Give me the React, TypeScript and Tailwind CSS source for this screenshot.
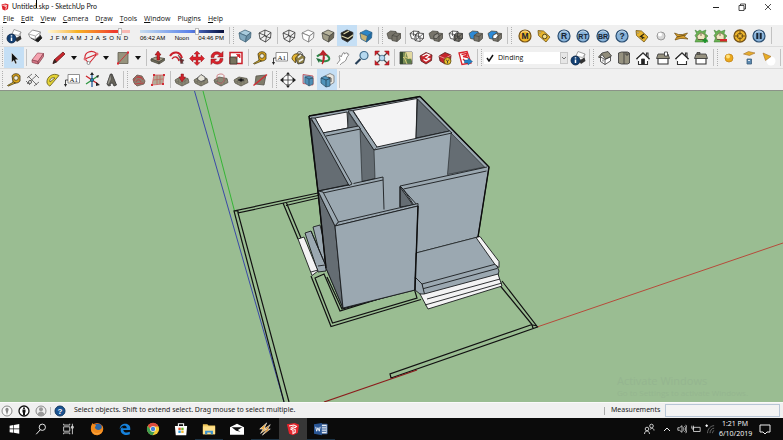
import { useState } from 'react';
import type { ReactNode } from 'react';

type Tool = [label: string, icon: ReactNode];

function Icon({ children }: { children: ReactNode }) {
  return (
    <svg viewBox="0 0 16 16" className="h-4 w-4 shrink-0" fill="none" stroke="#333" strokeWidth=".8" aria-hidden="true">
      {children}
    </svg>
  );
}

function Cube({ top, left, right, stroke }: { top: string; left: string; right: string; stroke?: string }) {
  return (
    <Icon>
      <g stroke={stroke ?? '#4a4a44'} strokeLinejoin="round">
        <path d="M2 5 8 2l6 2.500L9.500 8z" fill={top} />
        <path d="m2 5 7.500 3-1 6-5.500-3z" fill={left} />
        <path d="M9.500 8 14 4.500 13.500 10l-5 4z" fill={right} />
      </g>
    </Icon>
  );
}

function WireCube() {
  return (
    <Icon>
      <path d="M2 5 8 2l6 2.500-.5 5.500-5 4L3 11zM2 5l7.500 3L14 4.500M9.500 8l-1 6M8 2l-.5 6L3 11M7.500 8l6 2" strokeLinejoin="round" />
    </Icon>
  );
}

function StripedCube() {
  return (
    <Icon>
      <path d="M2 5 8 2l6 2.500-.5 5.500-5 4L3 11z" fill="#1f1f1c" />
      <path d="m4.500 6 5.500-3M2.500 8l6.500 2.500L14 7" stroke="#d8d2a8" strokeWidth="1.300" />
    </Icon>
  );
}

// Two overlapping solids, used by the solid tools
function Solids({ a, b, inner }: { a: string; b: string; inner?: string }) {
  return (
    <Icon>
      <path d="M1 5.500 4.500 3 10 3.500l1 4-3.500 4-5-1z" fill={a} stroke="#4c4b45" />
      <path d="m6 7.500 3.500-2.500 5 .5v5L11 13.500l-5-1z" fill={b} stroke="#4c4b45" />
      <path d="m6 7.500 5 1 3.500-3M11 8.500v5" stroke="#3c3b36" strokeWidth=".6" />
      {inner && <path d="m6 7.500 3.500-2 1.500 2-2 3H6z" fill={inner} stroke="#333" strokeWidth=".6" />}
    </Icon>
  );
}

function WireSolids({ fill }: { fill?: string }) {
  return (
    <Icon>
      <path d="M1 5.500 4.500 3 10 3.500l1 5-3.500 3-5-1z" fill="#fafafa" stroke="#333" />
      <path d="m6 7.500 3.500-2.500 5 .5v5L11 13.500l-5-1z" fill={fill ?? '#fafafa'} stroke="#333" />
      <path d="m6 7.500 5 1 3.500-3M11 8.500v5M1 5.500l5.500 1L10 3.500M6.500 6.500l1 5M9.500 5v5l5 .5M9.500 10 6 12.500M4.500 3v5" stroke="#333" strokeWidth=".7" />
    </Icon>
  );
}

function ShadowInfo() {
  return (
    <Icon>
      <path d="M6 6 8 1.500l7 2.500-1.500 5-6 1z" fill="#fff" stroke="#888" />
      <path d="m6 6 6.500 1.500L15 4" stroke="#999" />
      <path d="m9 11 5.500-3.500L15.500 11 11 14z" fill="#333" stroke="none" />
      <circle cx="5.500" cy="10.500" r="4.500" fill="#123f73" stroke="#0b2444" />
      <path d="M5.500 9.500V13M5.500 7.300v1.200" stroke="#fff" strokeWidth="1.500" />
    </Icon>
  );
}

function ShadowToggle() {
  return (
    <Icon>
      <path d="m4 10 7 4 4-4-2-3z" fill="#1c1c1c" stroke="#222" />
      <path d="M1.500 6 5.500 2l8 2-1 4-4.500 3.500-5-2z" fill="#fff" stroke="#777" />
      <path d="m1.500 6 7 2 5-4M8.500 8 8 11.500" stroke="#999" />
    </Icon>
  );
}

function Cursor() {
  return <Icon><path d="M5.500 2.500v10l2.300-2 1.500 3.500 1.700-.8-1.500-3.400h3z" fill="#111" stroke="#fff" strokeWidth=".5" /></Icon>;
}

function Eraser() {
  return (
    <Icon>
      <path d="m2 10 5.500-7 6 .5-5.500 8z" fill="#f5a3b0" stroke="#a45563" />
      <path d="m2 10 6 1.500.2 2.500-6-1.500zM8 11.500l5.500-8v3L8.200 14z" fill="#d77687" stroke="#8d4652" />
    </Icon>
  );
}

function Pencil() {
  return (
    <Icon>
      <path d="m2 13.500 1.500-4L12 2l2 2-8.500 8z" fill="#c9262d" stroke="#6d1b1b" />
      <path d="m2 13.500 1.500-4 2 2.500z" fill="#3a2a20" stroke="#222" strokeWidth=".6" />
    </Icon>
  );
}

function Arc() {
  return (
    <Icon>
      <path d="M2 9C1 2 9-1 14 4M2 9l4 4.500M14 4l-8 9.500M2 9l12-5" stroke="#d32530" strokeWidth="1.100" />
      <circle cx="2" cy="9" r="1" fill="#fff" stroke="#d32530" /><circle cx="14" cy="4" r="1" fill="#fff" stroke="#d32530" /><circle cx="5.500" cy="13" r="1.500" fill="#fff" stroke="#777" />
    </Icon>
  );
}

function Rect() {
  return (
    <Icon>
      <path d="M3 2.500h10v11H3z" fill="#96937d" stroke="#5f5d50" />
      <path d="m3 13.500 10-11" stroke="#d32530" />
      <path d="M2 12.500h2v2H2zM12 1.500h2v2h-2z" fill="#e02530" stroke="none" />
    </Icon>
  );
}

function PushPull() {
  return (
    <Icon>
      <path d="m1 9 5-2 8.500 1.500L9 12z" fill="#a5a189" stroke="#4c4a40" />
      <path d="m1 9 8 3v2L1 11zM9 12l5.500-3.500v2L9 14z" fill="#706d5a" stroke="#4c4a40" />
      <path d="M7 10V5H5l3-4 3 4H9.500v5z" fill="#d21f26" stroke="#7b1115" strokeWidth=".6" />
    </Icon>
  );
}

function Offset() {
  return (
    <Icon>
      <path d="M1 6c3-5 10-5 12 2" stroke="#c9202a" strokeWidth="2" />
      <path d="M3 9c2-3 6-3 7 2" stroke="#c9202a" strokeWidth="1.300" />
      <path d="m9 5 5 9-1-5zM10.500 9l1.500 5 3-4z" fill="#8d1a1f" stroke="#444" strokeWidth=".5" />
    </Icon>
  );
}

function Move() {
  return (
    <Icon>
      <path
        d="m8 1 3 3H9v3h3V5l3.500 3.500L12 12v-2H9v2.500h2L8 15.500 5 12.500h2V10H4v2L.500 8.500 4 5v2h3V4H5z"
        fill="#d9222b" stroke="#8d1519" strokeWidth=".4"
      />
    </Icon>
  );
}

function Rotate() {
  return (
    <Icon>
      <path d="M2 7.500C2 1.500 9 .500 12 3.500l2-2v5.500H8.500l2-2C8.500 3.500 5 4 5 7.500zM14 8.500c0 6-7 7-10 4l-2 2V9h5.500l-2 2c2 1.500 5.500 1 5.500-2.500z" fill="#dc222b" stroke="#7c1418" strokeWidth=".5" />
    </Icon>
  );
}

function Scale() {
  return (
    <Icon>
      <path d="M2 2.500h12v11H2z" fill="#fff" stroke="#c9202a" strokeWidth="1.500" />
      <path d="M2 7h7v7H2z" fill="#78745f" stroke="#3a382f" />
      <path d="m7 9 4-4M8.500 4.500H12V8z" fill="#d9222b" stroke="#d9222b" />
    </Icon>
  );
}

function Tape() {
  return (
    <Icon>
      <path d="M6 4c1-3 7-3 8 0v5c-1 2-6 3-7 1z" fill="#dca419" stroke="#3f3413" />
      <circle cx="10" cy="6" r="2.300" fill="#f4f0df" stroke="#4c421e" />
      <path d="m1.500 13.500 6-3.500 2 1-7 3z" fill="#e6bd32" stroke="#493c12" />
    </Icon>
  );
}

function TextLabel() {
  return (
    <Icon>
      <path d="M4 2.500h11.500v8.500H4z" fill="#fff" stroke="#777" />
      <path d="M4 8H1.500v6" stroke="#222" /><path d="m0 12 1.500 3L3 12z" fill="#222" stroke="none" />
      <text x="5.500" y="9.500" fontSize="7" fontFamily="Liberation Serif, serif" fill="#111" stroke="none">A1</text>
    </Icon>
  );
}

function Paint() {
  return (
    <Icon>
      <path d="m4 8 5-4.500 5 3.500-1.500 6-5.500 1z" fill="#8e8044" stroke="#333" />
      <path d="M1 9c0-4 3-6 7-5L4.500 8v5z" fill="#e3b432" stroke="#554417" />
      <path d="m7 7.500 3-2.500M8 11.500l4-2.500" stroke="#eee" strokeWidth="1.600" />
      <path d="M6 4.500c0-4 5-4 6 1" />
    </Icon>
  );
}

function Orbit() {
  return (
    <Icon>
      <path d="M2 6.500c3-3 10-3 12 1s-6 4.500-10 2.500" stroke="#2b8a4a" strokeWidth="2" />
      <path d="M8 4c2 2 1 8-1 10M5.500 4.500 8 1l3 3.500z" fill="#cc2930" stroke="#b7242a" strokeWidth="1.500" />
      <path d="m1 8 4 1-1 4z" fill="#236f3c" stroke="none" />
    </Icon>
  );
}

function Hand() {
  return (
    <Icon>
      <path
        d="m2 14 3-4-1-4c1-1 2 0 2 1l2-4c1-1 2 0 1 1l2-1c1-.5 2 0 1 1l1 0c2 0 0 2-1 3l-1 3c-2 3-4 2-6 5"
        fill="#fff" stroke="#777"
      />
    </Icon>
  );
}

function Zoom() {
  return (
    <Icon>
      <path d="m1.500 14 5-5" stroke="#263f57" strokeWidth="2.200" />
      <circle cx="10" cy="5.500" r="4" fill="#b6d9ef" stroke="#426c89" strokeWidth="1.200" />
    </Icon>
  );
}

function ZoomExtents() {
  return (
    <Icon>
      <path d="m2 2 12 12M14 2 2 14" stroke="#444" strokeWidth="1.200" />
      <path d="M1 1h4.500L1 5.500zM15 1v4.500L10.500 1zM1 15v-4.500L5.500 15zM15 15h-4.500L15 10.500z" fill="#ce2029" stroke="#8e151b" strokeWidth=".5" />
      <circle cx="8" cy="8" r="2.800" fill="#b6d9ef" stroke="#436782" />
    </Icon>
  );
}

function MapTool() {
  return (
    <Icon>
      <path d="M2 2h12v12H2z" fill="#7b8f58" stroke="#444" />
      <path d="M8 2h6v7l-4-1z" fill="#e3d9a0" stroke="none" />
      <path d="m2 11 4-4 3 7M8 2 7 7l7 3" stroke="#ead983" />
      <path d="M2 2h3v12H2z" fill="#34492f" stroke="none" />
      <path d="M9 9h4v4H9z" fill="#5a7c4c" stroke="none" />
    </Icon>
  );
}

function Warehouse({ badge }: { badge?: boolean }) {
  return (
    <Icon>
      <path d="m2 6 6-3.500 6 2.500-.5 5.500L8 14l-5-3z" fill="#c5252b" stroke="#57201f" />
      {!badge && <path d="m4.500 6 4-2 3 1.200L8 7.500l3.500 1.300L8 11 5.500 9.500" stroke="#fff" strokeWidth="1.200" />}
      {badge && <path d="m2 6 6 2.500L14 5" stroke="#f2a4a4" />}
      {badge && <circle cx="10.500" cy="11" r="3.500" fill="#e8bd2b" stroke="#5c4b12" />}
      {badge && <path d="m9 9.500 1.500 2 1.500-2M10.500 11v2.500" stroke="#333" />}
    </Icon>
  );
}

function LayOut() {
  return (
    <Icon>
      <path d="m2 3 8-1.500L14 13l-9 1.500z" fill="#fff" stroke="#d9222b" strokeWidth="1.300" />
      <path d="m4.500 4.500 5-1 .5 2-4 1 5 1M6 9l2 2" stroke="#d9222b" strokeWidth="1.300" />
      <path d="M7.500 10H11V8l4.500 3.500L11 15v-2H7.500z" fill="#2383c7" stroke="#164f79" strokeWidth=".4" />
    </Icon>
  );
}

function Dimension() {
  return (
    <Icon>
      <path d="m2 6 5-4M9 14l5-4M3 4l9 9M2 12l10-9M1 9l4 4M10 2l4 4" stroke="#555" />
      <circle cx="5" cy="10" r="1.500" fill="#fff" />
    </Icon>
  );
}

function Protractor() {
  return (
    <Icon>
      <path d="M2 11C1 5 8 0 14 3.500L5 14c-1 0-2-1-3-3z" fill="#e5d336" stroke="#605818" />
      <path d="M5 10c-1-3 2-5 5-4z" fill="#f0f0f0" stroke="#605818" />
    </Icon>
  );
}

function Axes() {
  return (
    <Icon>
      <path d="m8 8-6-4M8 8l6 4" stroke="#cf242b" strokeWidth="1.300" />
      <path d="m8 8 6-4M8 8l-6 4" stroke="#2f9641" strokeWidth="1.300" />
      <path d="M8 1v14" stroke="#265f9d" strokeWidth="1.300" />
      <path d="m6 3 2-3 2 3zM12 10l4 3-4 1zM12 4l3-1-1 3z" fill="#222" stroke="none" />
      <circle cx="8" cy="8" r="1.600" fill="#2a83ac" stroke="#174c67" />
    </Icon>
  );
}

function Text3D() {
  return (
    <Icon>
      <path d="m4 12 3.500-10H9l4.500 11-2.500 1-1.500-3-2.500.5.5 2-2 .5z" fill="#66645a" stroke="#333" />
      <path d="M4 12 7.500 2l1 5L6 12.500z" fill="#99978c" stroke="#444" strokeWidth=".6" />
    </Icon>
  );
}

function Terrain({ kind }: { kind: 'contour' | 'grid' | 'smoove' | 'stamp' | 'drape' | 'detail' | 'flip' }) {
  if (kind === 'contour') {
    return (
      <Icon>
        <path d="m2 7 4-4 5 1 3 5-1 3-7 2-3-3z" fill="#8d7f70" stroke="#6d5349" />
        <path d="M3 9c1-5 7-6 9-1M5 10c1-3 4-3 5 0M3.500 12l9-1M6 5l5 1" stroke="#ce343b" />
      </Icon>
    );
  }
  if (kind === 'grid') {
    return (
      <Icon>
        <path d="m4 3 10 0-1 9-11 1z" fill="#b3ac98" stroke="#d9646a" />
        <path d="m3 8 10-1M7 3v10M10 3v9" stroke="#bd6b60" />
        <path d="M3 2h2v2H3zM13 2h2v2h-2zM1 12h2v2H1zM12 11h2v2h-2z" fill="#d12c34" stroke="none" />
      </Icon>
    );
  }
  if (kind === 'flip') {
    return <Icon><path d="m4 4 10-1-2 10-9-1z" fill="#7f7c6a" stroke="#55534a" /><path d="M1.500 13.500 15 2.500" stroke="#d12c34" strokeWidth="1.300" /></Icon>;
  }
  return (
    <Icon>
      <path d="m1 8 5-3 8 1.500 1 4L8 14l-6-3z" fill="#8c8975" stroke="#5a584d" />
      <path d="m2 9 6 2 6-4M8 11v3M5 6l-1 6M11 6v6" stroke="#6a685c" strokeWidth=".6" />
      {kind === 'smoove' && <path d="M7 5V2h2.500v3h2L8 10 5 5z" fill="#cf222a" stroke="#801519" strokeWidth=".5" />}
      {kind === 'stamp' && <path d="m4.500 6 3.500-3.500 4 2.500v3L8 9.500 5 8z" fill="#e5e3d8" stroke="#444" />}
      {kind === 'drape' && <path d="M4 8V3.500c2-2 6-2 7 0V9M4 10c2 2 5 2 7-1" stroke="#c7646a" />}
      {kind === 'detail' && <path d="m5 8 3-1.500 3 1.500-3 1.500z" fill="#111" />}
    </Icon>
  );
}

function SectionPlane() {
  return (
    <Icon>
      <circle cx="8" cy="8" r="5" fill="#fff" stroke="#333" />
      <path d="M3 8h10M8 1v14" stroke="#333" />
      <path d="m6 2.500 2-2.500 2 2.500zM6 13.500 8 16l2-2.500zM0 8l3-2.500v5zM16 8l-3-2.500v5z" fill="#222" stroke="none" />
    </Icon>
  );
}

function SectionCube({ red }: { red?: boolean }) {
  if (red) {
    return (
      <Icon>
        <path d="M3 2.500 13 4v9L3 11.500z" fill="#8dbfdc" stroke="#c74149" />
        <path d="m5 5 4-1 4 2v6l-4 2-4-3z" fill="#4f8fb8" stroke="#47677c" />
        <path d="m9 7 4-1M9 7v7M5 5l4 2" stroke="#2c4f66" />
      </Icon>
    );
  }
  return (
    <Icon>
      <path d="m6 4 5-2.500 4 2v7L11 13z" fill="#e8e6df" stroke="#777" />
      <path d="m2 6 4-2 5 2.500V14l-4 1-5-4z" fill="#4f93bb" stroke="#34566c" />
      <path d="m7 8 4-1.500M7 8v7M2 6l5 2" stroke="#234355" />
      <path d="m9 5 3 1v4" stroke="#333" />
    </Icon>
  );
}

function Badge({ text, gold }: { text: string; gold?: boolean }) {
  return (
    <Icon>
      <circle cx="8" cy="8" r="6" fill={gold ? '#eeb52a' : '#86b1d8'} stroke={gold ? '#765316' : '#2b4e71'} strokeWidth="1.200" />
      <path d="M4 5.500c1-3 6-3.500 8-.5" stroke="#fff" opacity=".7" />
      <text x="8" y={text.length > 1 ? 10.5 : 11} textAnchor="middle" fontSize={text.length > 1 ? 7 : 8.5} fontWeight="700" fontFamily="Liberation Sans, sans-serif" fill="#182432" stroke="none">{text}</text>
    </Icon>
  );
}

function Pause() {
  return (
    <Icon>
      <circle cx="8" cy="8" r="6" fill="#86b1d8" stroke="#2b4e71" strokeWidth="1.200" />
      <path d="M4 5.500c1-3 6-3.500 8-.5" stroke="#fff" opacity=".7" />
      <path d="M6.300 5v6M9.700 5v6" stroke="#182432" strokeWidth="2" />
    </Icon>
  );
}

function Tag({ round }: { round?: boolean }) {
  return (
    <Icon>
      <path d="m2 2.500 5.500.5 6.500 6-4 5L2.500 7.500z" fill="#e7b42d" stroke="#705619" />
      {round ? <circle cx="8.700" cy="8.500" r="2.300" fill="#f4df8e" stroke="#33290d" /> : <path d="M10 6 6.500 8.500l4 1.500M7.500 7l1 4" stroke="#33290d" strokeWidth="1.200" />}
      <circle cx="4" cy="4.500" r=".8" fill="#fff" stroke="#705619" strokeWidth=".5" />
    </Icon>
  );
}

function Sphere({ gold }: { gold?: boolean }) {
  return (
    <Icon>
      <circle cx="8" cy="8" r="4" fill={gold ? '#eba91d' : '#d8d8d8'} stroke={gold ? '#c38419' : '#888'} />
      <circle cx="7" cy="6.500" r="2" fill={gold ? '#ffe17d' : '#fff'} stroke="none" />
    </Icon>
  );
}

function Plane() {
  return <Icon><path d="m1.500 5 4 1.500h4l5-1.500-3 3.500 3.500 2.500-5-.5-3 0-5 1.500 2-3.500z" fill="#d69d29" stroke="#6b4d16" strokeWidth=".7" /><path d="m4 9 8-2" stroke="#5b4112" /></Icon>;
}

function Proxy({ minus }: { minus?: boolean }) {
  return (
    <Icon>
      <path d="m2 2 2.500 1.500L7 2l2 1.500L13 2l-1 3.500L15 8l-2 2 2 4H2l1.500-4L2 7.500l1.500-2z" fill="#69b052" stroke="#3d7c32" strokeWidth=".5" />
      <path d="m4 8 4-3.500L12 7v4.500H5z" fill="#f0e6c2" stroke="#6e6142" strokeWidth=".6" />
      <path d="M5 11.500h6M8 5v3" stroke="#5b4f35" strokeWidth=".8" />
      {minus ? <path d="M8 11h7v2.500H8z" fill="#d6262b" stroke="none" /> : <path d="M12 10v5M9.500 12.500h5" stroke="#19912b" strokeWidth="1.600" />}
    </Icon>
  );
}

function Target() {
  return (
    <Icon>
      <circle cx="8" cy="8" r="6" fill="#efb72d" stroke="#765316" strokeWidth="1.300" />
      <circle cx="8" cy="8" r="2.800" stroke="#5d4313" /><path d="M8 3v4M8 9v4M3 8h4M9 8h4" stroke="#5d4313" />
    </Icon>
  );
}

function House({ kind }: { kind: 'iso' | 'top' | 'front' | 'right' | 'back' | 'left' }) {
  if (kind === 'iso') {
    return (
      <Icon>
        <path d="M3.500 7 8 9.500 13.500 7v4L8 14.500l-4.500-3z" fill="#fff" />
        <path d="m1.500 7 3.500-4L11 1.500 14.500 6 8.500 9 5 4.500 2.500 8z" fill="#918d7b" />
        <path d="M6 9.500v2M8 9.500v5" />
      </Icon>
    );
  }
  if (kind === 'top') {
    return <Icon><path d="m2.500 3 3-1h6l2 1v10l-2 1h-6l-3-1z" fill="#969280" /><path d="M8 2v12M10 2v3h2V2.500" /></Icon>;
  }
  if (kind === 'front' || kind === 'back') {
    return (
      <Icon>
        <path d="M3.500 8v6.500h9V8" fill="#fff" strokeWidth="1.100" />
        <path d="M1.500 9 8 3l6.500 6M11.500 5.500V3H13v4" strokeWidth="1.100" />
        <path d="m8 3 5 5v3H3V8z" fill="#fff" stroke="none" />
        <path d="M1.500 9 8 3l6.500 6" strokeWidth="1.100" />
        {kind === 'front' && <path d="M6.500 9h3v5.500h-3z" fill="#222" />}
      </Icon>
    );
  }
  return (
    <Icon>
      <path d="M3 8h10v6H3z" fill="#fff" strokeWidth="1.100" />
      <path d="M3 4h10l1.500 4.500h-13z" fill="#969280" />
      {kind === 'right' && <path d="M9.500 2h3v4h-3z" fill="#fff" />}
      {kind === 'left' && <path d="M4 2.500h3V4H4z" fill="#969280" />}
    </Icon>
  );
}

function AreaLight() {
  return (
    <Icon>
      <path d="m2.500 4 5-2.500L14 3 8.500 5.500z" fill="#e6ad2c" stroke="#a36f2c" strokeWidth=".6" />
      <path d="M6 9h4.500v5H6z" fill="#5c89af" stroke="#3b5d7b" /><path d="M7 10.500h2" stroke="#fff" />
    </Icon>
  );
}

function SpotLight() {
  return <Icon><circle cx="11" cy="11" r="4.500" fill="#fff" stroke="none" /><path d="m3 3 8 3.500-5.500 4z" fill="#e8ad25" stroke="#a36f2c" strokeWidth=".6" /></Icon>;
}

const SHADOW: Tool[] = [['Shadow settings', <ShadowInfo />], ['Show shadows', <ShadowToggle />]];
const EDGE_STYLE: Tool[] = [['X-ray', <Cube top="#a9cbdd" left="#82a9bf" right="#688da3" stroke="#44677c" />], ['Back edges', <WireCube />]];
const FACE_STYLE: Tool[] = [
  ['Wireframe', <WireCube />],
  ['Hidden line', <Cube top="#fff" left="#fff" right="#f4f4f4" stroke="#777" />],
  ['Shaded', <Cube top="#b6b39c" left="#a19e88" right="#6d6957" />],
  ['Shaded with textures', <StripedCube />],
  ['Monochrome', <Cube top="#2a86c8" left="#c8b273" right="#1f6ca6" stroke="#2f6288" />],
];
const SHELL: Tool[] = [['Outer shell', <Solids a="#77746a" b="#77746a" />]];
const SOLID: Tool[] = [
  ['Intersect', <WireSolids />],
  ['Union', <Solids a="#77746a" b="#77746a" inner="#96938a" />],
  ['Subtract', <WireSolids fill="#77746a" />],
  ['Trim', <Solids a="#2d8ad6" b="#77746a" />],
  ['Split', <Solids a="#2d8ad6" b="#77746a" inner="#fff" />],
];
const VRAY: Tool[] = [
  ['Material editor', <Badge text="M" gold />], ['Options', <Tag round />], ['Render', <Badge text="R" />],
  ['Real-time render', <Badge text="RT" />], ['Batch render', <Badge text="BR" />], ['Help', <Badge text="?" />],
  ['Frame buffer', <Tag />], ['Sphere', <Sphere />], ['Infinite plane', <Plane />], ['Export proxy', <Proxy />],
  ['Import proxy', <Proxy minus />], ['Camera focus', <Target />], ['Freeze render', <Pause />],
];
const EDIT: Tool[] = [['Push/Pull', <PushPull />], ['Offset', <Offset />], ['Move', <Move />], ['Rotate', <Rotate />], ['Scale', <Scale />]];
const MEASURE: Tool[] = [['Tape measure', <Tape />], ['Text', <TextLabel />], ['Paint bucket', <Paint />]];
const VIEW: Tool[] = [['Orbit', <Orbit />], ['Pan', <Hand />], ['Zoom', <Zoom />], ['Zoom extents', <ZoomExtents />]];
const SHARE: Tool[] = [
  ['Add location', <MapTool />], ['3D Warehouse', <Warehouse />],
  ['Extension Warehouse', <Warehouse badge />], ['Send to LayOut', <LayOut />],
];
const VIEWS: Tool[] = [
  ['Iso', <House kind="iso" />], ['Top', <House kind="top" />], ['Front', <House kind="front" />],
  ['Right', <House kind="right" />], ['Back', <House kind="back" />], ['Left', <House kind="left" />],
];
const LIGHTS: Tool[] = [['Omni light', <Sphere gold />], ['Rectangle light', <AreaLight />], ['Spot light', <SpotLight />]];
const CONSTRUCTION: Tool[] = [
  ['Tape', <Tape />], ['Dimension', <Dimension />], ['Protractor', <Protractor />],
  ['Label', <TextLabel />], ['Axes', <Axes />], ['3D text', <Text3D />],
];
const SANDBOX: Tool[] = [['From contours', <Terrain kind="contour" />], ['From scratch', <Terrain kind="grid" />]];
const TERRAIN: Tool[] = [
  ['Smoove', <Terrain kind="smoove" />], ['Stamp', <Terrain kind="stamp" />], ['Drape', <Terrain kind="drape" />],
  ['Add detail', <Terrain kind="detail" />], ['Flip edge', <Terrain kind="flip" />],
];
const SECTION: Tool[] = [['Section plane', <SectionPlane />], ['Display section planes', <SectionCube red />], ['Display section cuts', <SectionCube />]];

function Strip({ tools, className, active }: { tools: Tool[]; className: string; active?: number }) {
  return (
    <div className={`flex h-full shrink-0 ${className}`}>
      {tools.map(([label, icon], i) => (
        <button
          key={label}
          aria-label={label}
          className={`flex min-w-0 flex-1 items-center justify-center hover:bg-[#dcebf8] ${i === active ? 'bg-[#c5dff5]' : ''}`}
        >
          {icon}
        </button>
      ))}
    </div>
  );
}

function Sep() {
  return <div className="flex h-full w-1 shrink-0 justify-center py-0.5"><span className="w-px bg-[#c2c2c2]" /></div>;
}

function Grip() {
  return <div className="flex h-full w-1 shrink-0 justify-center py-0.5"><span className="border-l border-dotted border-[#b0b0b0]" /></div>;
}

function DrawTool({ label, icon }: { label: string; icon: ReactNode }) {
  return (
    <div className="mr-0.5 flex h-full shrink-0 items-center">
      <button aria-label={label} className="flex h-full w-[22px] items-center justify-center">{icon}</button>
      <button aria-label={`${label} options`} className="flex h-full w-2 items-center justify-center">
        <svg viewBox="0 0 6 4" className="h-1 w-1.5 shrink-0"><path d="M0 0h6L3 4z" fill="#111" /></svg>
      </button>
    </div>
  );
}

function ShadowSliders() {
  const [month, setMonth] = useState(11);
  const [hour, setHour] = useState(68);
  return (
    <>
      <div className="relative ml-[3px] w-[82px] shrink-0">
        <div className="h-[3px] bg-linear-to-r from-[#fff6cf] via-[#f6b322] via-35% to-[#ef3a2c] to-80%" />
        <input
          type="range" min="0" max="15" value={month} aria-label="Date"
          onChange={(e) => setMonth(Number(e.target.value))}
          className="absolute inset-x-0 top-0 h-1 w-full opacity-0"
        />
        <span className="absolute top-0 right-0 h-[3px] w-2 bg-[#f8b9b4]" />
        <span className="absolute -top-0.5 left-[70px] h-[7px] w-1 border border-[#bbb] bg-white" />
        <div className="mt-0.5 flex justify-between px-0.5 text-[6px] leading-[7px]">
          {'JFMAMJJASOND'.split('').map((m, i) => <span key={i}>{m}</span>)}
        </div>
      </div>
      <div className="relative ml-2.5 mr-[3px] w-[84px] shrink-0">
        <div className="h-[3px] bg-linear-to-r from-[#c8dced] via-[#5b80e8] via-60% to-[#08103a]" />
        <input
          type="range" min="0" max="100" value={hour} aria-label="Time"
          onChange={(e) => setHour(Number(e.target.value))}
          className="absolute inset-x-0 top-0 h-1 w-full opacity-0"
        />
        <span className="absolute -top-0.5 left-[55px] h-[7px] w-1 border border-[#bbb] bg-white" />
        <div className="mt-0.5 flex justify-between text-[6px] leading-[7px]">
          <span>06:42 AM</span><span>Noon</span><span>04:46 PM</span>
        </div>
      </div>
    </>
  );
}

function Toolbars() {
  return (
    <div className="overflow-hidden border-b border-[#8b9388] bg-[#f0f0f0]">
      <div className="flex h-[22px] items-center border-b border-[#dcdcdc] font-['Liberation_Sans',sans-serif] text-black">
        <Grip />
        <Strip tools={SHADOW} className="w-[41px]" />
        <ShadowSliders />
        <Sep /><Grip />
        <Strip tools={EDGE_STYLE} className="w-10" />
        <Sep />
        <Strip tools={FACE_STYLE} className="w-[97px]" active={3} />
        <Sep /><Grip />
        <Strip tools={SHELL} className="w-[19px]" />
        <Sep />
        <Strip tools={SOLID} className="w-[98px]" />
        <Sep /><Grip />
        <Strip tools={VRAY} className="ml-0.5 w-[254px]" />
        <Sep />
      </div>
      <div className="flex h-[22px] items-center border-b border-[#dcdcdc]">
        <Grip />
        <Strip tools={[['Select', <Cursor />]]} className="w-5" active={0} />
        <Sep />
        <Strip tools={[['Eraser', <Eraser />]]} className="w-5" />
        <DrawTool label="Line" icon={<Pencil />} />
        <DrawTool label="Arc" icon={<Arc />} />
        <DrawTool label="Rectangle" icon={<Rect />} />
        <Sep />
        <Strip tools={EDIT} className="w-[98px]" />
        <Sep />
        <Strip tools={MEASURE} className="w-[59px]" />
        <Sep />
        <Strip tools={VIEW} className="w-[79px]" />
        <Sep />
        <Strip tools={SHARE} className="w-[79px]" />
        <Sep /><Grip />
        <div className="relative ml-px flex h-3 w-[84px] shrink-0 items-center bg-white">
          <svg viewBox="0 0 8 8" className="ml-0.5 h-2 w-2 shrink-0"><path d="m1 4 2 3 4-6" stroke="#111" strokeWidth="1.500" fill="none" /></svg>
          <select aria-label="Layer" className="h-full min-w-0 flex-1 appearance-none pl-1 text-[7px] leading-3">
            <option>Dinding</option>
          </select>
          <span className="pointer-events-none flex h-full w-2 items-center justify-center border border-[#c8c8c8] bg-[#e6e6e6]">
            <svg viewBox="0 0 6 4" className="h-1 w-1.5 shrink-0"><path d="m1 1 2 2 2-2" stroke="#555" fill="none" strokeWidth=".8" /></svg>
          </span>
        </div>
        <Strip tools={[['Layer manager', <ShadowInfo />]]} className="w-[19px]" />
        <Sep /><Grip />
        <Strip tools={VIEWS} className="w-[116px]" />
        <Sep /><Grip />
        <Strip tools={LIGHTS} className="w-[59px]" />
        <Sep />
      </div>
      <div className="flex h-[21px] items-center">
        <Grip />
        <Strip tools={CONSTRUCTION} className="w-[117px]" />
        <Sep /><Grip />
        <Strip tools={SANDBOX} className="w-[39px]" />
        <Sep />
        <Strip tools={TERRAIN} className="w-[98px]" />
        <Sep /><Grip />
        <Strip tools={SECTION} className="w-[59px]" active={2} />
        <Sep />
      </div>
    </div>
  );
}

const LIGHT = '#9ba8b1';
const DARK = '#656d73';
const WHITE = '#f3f3f4';

function Model() {
  return (
    <svg viewBox="0 91 783 311" preserveAspectRatio="xMidYMid slice" className="block h-full w-full" aria-label="House model">
      {/* axes */}
      <g fill="none" strokeWidth="1">
        <path d="M194.500 91 284 402" stroke="#3a49a8" />
        <path d="M203 91 234.500 211" stroke="#35b535" />
        <path d="M537 327 783 243" stroke="#b64a3a" />
      </g>
      {/* fence and path outlines on the ground */}
      <g fill="none" stroke="#111" strokeWidth="1.200">
        <path d="M318 193 234 211 284 402M318 195.500 238 213 289 402M234 211h4v2" />
        <path d="m283 203 15 36M286.500 203l14.500 35M286 205.500 318 198" />
        <path d="m311 276 20 50.500 90-27M315 278l17.500 45 84.500-25-3-10-74 23-16-37z" />
        <path d="m327 277 15 32 73-20" />
        <path d="m502 281 35.500 46L391 378l-1-4 142-49.500-32-39M532 324.500l1 4M533 325l4 1" />
      </g>
      <path d="m324 402 93-32" stroke="#8c1c1c" strokeWidth="1.200" />

      <g stroke="#1a1c1e" strokeWidth=".9" strokeLinejoin="round">
        {/* steps on the left */}
        <path d="m313 227 7-2 10 40-6 5z" fill={LIGHT} />
        <path d="m305 233 6-2 15 35v5l-8 1z" fill={LIGHT} />
        <path d="m311 231 14 33" fill="none" />
        <path d="m298 239 6-2 14 34-6 4.500z" fill={WHITE} />
        <path d="m311 272 7-2M318 266l7-1" fill="none" />

        {/* shell */}
        <path d="M309 116 420 96.500l69 70.500-11 70-62 16-1 37-72 18-17-40-8-76z" fill={LIGHT} />
        <path d="m315 118 32-6 1 16-25 5z" fill={WHITE} />
        <path d="m348 112 10 15-10 2z" fill={DARK} strokeWidth=".5" />
        <path d="m353 110.500 64-12-1 41-39 8z" fill={WHITE} />
        <path d="m417.500 99 32 32-33.500 7z" fill={DARK} />
        <path d="m451 133 33.500 34-37 7.500z" fill={DARK} strokeWidth=".6" />
        <path d="m360 128 14 22 1 28.500-13 3z" fill={DARK} strokeWidth=".6" />
        <path d="m310 118 12 17 27 50-31 6z" fill={DARK} />
        <path d="m400 187 13 18-13 2z" fill={DARK} />

        {/* wall tops */}
        <path d="m348 111 4.500-.5L377 147l-3 3z" fill={LIGHT} />
        <path d="m374 150 78-17-2.500-2L377 147" fill={LIGHT} />
        <path d="m322.500 133 36-7 2 3-34.500 7" fill={LIGHT} />
        <path d="m311 118 4 0 37 66-3 1.500-27-49z" fill={LIGHT} />
        <path d="M353.500 183.500 383 177l1 32.500M318 191l31-6.500M323 193l60-13M403.500 189l83-18" fill="none" />
        <path d="M400 207v-21l87-19" fill="none" />
        <path d="m400 186 18 20-4.500-1.500-10-15z" fill={LIGHT} />

        {/* front room */}
        <path d="m318 191 17 35 8 82-17-40z" fill={DARK} />
        <path d="m318 191 17 35 3.500-4-15.500-30z" fill={LIGHT} />
        <path d="m338.500 222 79.500-18.500v2.500l-83 20z" fill={LIGHT} />
        <path d="m335 226 83-20-3 84-72 18z" fill={LIGHT} />

        {/* terrace and front steps */}
        <path d="m416 253 62-16 20 25-3 5-73 21.500-7-11.500z" fill={LIGHT} strokeWidth=".7" />
        <path d="m422 284 74-20 3 7-1 4-74 20z" fill={LIGHT} />
        <path d="m422 289 75-20.500" fill="none" />
        <path d="m415 277 7 7 3 12-5-2-5-4z" fill={LIGHT} />
        <path d="m424 294 74-20 4 12-74 23-8-15z" fill={WHITE} />
        <path d="m427 299 73-20M425 305l77-22" fill="none" />
        <path d="m476 237.500 4-1 19 25v6l-4-3z" fill={WHITE} />
      </g>
      <path d="m309 116 9 76 8 76M420 96.500l69 70.500-11 70M418 206l-3 84M309 116 420 96.500" fill="none" stroke="#0c0c0c" strokeWidth="1.400" />
    </svg>
  );
}

function StatusBar() {
  return (
    <div className="flex h-4 shrink-0 items-center overflow-hidden border-t border-[#fafafa] bg-[#f0f0f0] font-['Noto_Sans','Open_Sans',sans-serif] text-[7px] text-[#222]">
      <button aria-label="Geo-location" className="ml-px shrink-0">
        <svg viewBox="0 0 12 12" className="h-3 w-3"><circle cx="6" cy="6" r="5" fill="#fafafa" stroke="#888" /><path d="M6 10 4.500 5a1.600 1.600 0 1 1 3 0z" fill="#888" /></svg>
      </button>
      <button aria-label="Credits" className="ml-[5px] shrink-0">
        <svg viewBox="0 0 12 12" className="h-3 w-3"><circle cx="6" cy="6" r="5" fill="#fff" stroke="#111" strokeWidth="1.300" /><circle cx="6" cy="3.300" r="1" fill="#111" /><path d="M4.500 4.500h3v3H7v2.500H5V7.500h-.5z" fill="#111" /></svg>
      </button>
      <button aria-label="Sign in" className="ml-[5px] shrink-0">
        <svg viewBox="0 0 12 12" className="h-3 w-3"><circle cx="6" cy="6" r="5" fill="#eee" stroke="#888" /><circle cx="6" cy="4.300" r="2" fill="#999" /><path d="M2.500 9.500c1-4 6-4 7 0-2 2-5 2-7 0z" fill="#999" /></svg>
      </button>
      <span className="mx-[3px] h-2 w-px shrink-0 bg-[#bbb]" />
      <button aria-label="Help" className="shrink-0">
        <svg viewBox="0 0 12 12" className="h-3 w-3"><circle cx="6" cy="6" r="5" fill="#1c5493" stroke="#123760" /><text x="6" y="9" textAnchor="middle" fontSize="8" fontWeight="700" fontFamily="Liberation Sans, sans-serif" fill="#fff">?</text></svg>
      </button>
      <p className="ml-2 whitespace-nowrap">Select objects. Shift to extend select. Drag mouse to select multiple.</p>
      <span className="ml-auto h-2 w-px shrink-0 bg-[#aaa]" />
      <label htmlFor="vcb" className="ml-1.5 w-[54px] whitespace-nowrap">Measurements</label>
      <input id="vcb" className="mr-[3px] h-[13px] w-[115px] border border-[#b8c6d6] bg-[#f3f3f3] px-1" />
    </div>
  );
}

function TaskIcon({ children }: { children: ReactNode }) {
  return <svg viewBox="0 0 16 16" className="h-3.5 w-3.5 shrink-0" fill="none" aria-hidden="true">{children}</svg>;
}

const SYSTEM_ITEMS: Tool[] = [
  ['Start', <TaskIcon><path d="M3 4.200 7.300 3.500v4H3zM8 3.400l6-1v5.100H8zM3 8.300h4.300v4L3 11.700zM8 8.300h6v5.100l-6-1z" fill="#fff" /></TaskIcon>],
  ['Search', <TaskIcon><circle cx="9.500" cy="6" r="3.600" stroke="#eee" strokeWidth="1.100" /><path d="m7 9-4.500 5" stroke="#eee" strokeWidth="1.100" /></TaskIcon>],
  ['Task view', <TaskIcon><path d="M3 5.500h7v5H3zM3 2v1.500h7V2M3 14v-1.500h7V14M13 2v12M12 5h2v2h-2z" stroke="#ddd" /></TaskIcon>],
];

const APP_ITEMS: Tool[] = [
  ['Firefox', <TaskIcon><circle cx="8" cy="8" r="7" fill="#e66b17" /><circle cx="9" cy="6.500" r="4.500" fill="#2866a8" /><path d="M1 7c0-3 1-4 2-6 1 2 3 2 4 3L5.500 6c1 3 4 4 7 2 1-1 2-3 1-5 3 4 2 11-5 12C3 15 1 11 1 7z" fill="#f18a1c" /><path d="M2 9c3 4 8 5 12 1-2 6-11 6-12-1z" fill="#f8a13a" /></TaskIcon>],
  ['Edge', <TaskIcon><path d="M2 8C2 0 14 0 14 7v2H6c1 4 5 3 7.500 2v3C9 16 3 14 3 9c0-2 1-3 3-4-1 1-1 1-1 2h5C10 3 5 3 2 8z" fill="#1682dc" /></TaskIcon>],
  ['Chrome', <TaskIcon><circle cx="8" cy="8" r="7" fill="#f5ca36" /><path d="M2 4.500C5-.5 12 0 14.300 5H8a3 3 0 0 0-3 3z" fill="#dc4a3d" /><path d="M2 4.500A7 7 0 0 0 7.500 15l3-5A3 3 0 0 1 5 8.500z" fill="#3f9e53" /><circle cx="8" cy="8" r="3.200" fill="#fff" /><circle cx="8" cy="8" r="2.500" fill="#4383d8" /></TaskIcon>],
  ['Store', <TaskIcon><path d="M5 5V2h6v3" stroke="#fff" strokeWidth="1.200" /><path d="M1 4.500h14L14 15H2z" fill="#fff" /><path d="M5 6.500h2.700v2.700H5z" fill="#e65333" /><path d="M8.300 6.500H11v2.700H8.300z" fill="#75b72e" /><path d="M5 9.800h2.700v2.700H5z" fill="#2d9fde" /><path d="M8.300 9.800H11v2.700H8.300z" fill="#f5b82b" /></TaskIcon>],
  ['File Explorer', <TaskIcon><path d="M1 2.500h5l1.500 1.500H15v10H1z" fill="#f1c75a" /><path d="M1 5h14v9H1z" fill="#ffe08a" /><path d="M3.500 14v-4h9v4H10v-2H6v2z" fill="#3b92cf" /></TaskIcon>],
  ['Mail', <TaskIcon><path d="m0 6 8-4 8 4v8.500H0z" fill="#fff" /><path d="M2 6h12l-5 3 3 2-5-1z" fill="#111" /></TaskIcon>],
  ['Winamp', <TaskIcon><path d="m10 1-8 7h4l-3 5 8-6H7z" fill="#f0a52c" stroke="#fff" strokeWidth=".7" /><path d="m14 3-7 5h3l-5 7 9-7h-3z" fill="#d88a22" stroke="#eee" strokeWidth=".7" /></TaskIcon>],
  ['SketchUp', <SketchUpLogo />],
  ['Word', <TaskIcon><path d="M7 2.500h8v11H7z" fill="#fff" stroke="#295594" /><path d="M9 5h5M9 7h5M9 9h5M9 11h5" stroke="#295594" /><path d="m0 2.500 9-1.500v14L0 13.500z" fill="#295594" /><path d="m2 5.500 1 5 1.500-4 1.500 4 1-5" stroke="#fff" /></TaskIcon>],
];

function SketchUpLogo() {
  return (
    <TaskIcon>
      <path d="m1 2.500 9-1.500 5 2-1.500 9.500L8 15l-4.500-1.500z" fill="#e5242c" />
      <path d="m3.500 4.500 5.500-1 3 1.500-1.500 1.500L8 5.500l-2 1.200 4.500 2v3.300L8 13V9.500L5 8" stroke="#fff" strokeWidth="1.200" />
    </TaskIcon>
  );
}

function Taskbar() {
  return (
    <div className="flex h-[22px] shrink-0 items-center overflow-hidden bg-[#0b0b0b] text-white">
      <Strip tools={SYSTEM_ITEMS} className="mr-0.5 w-[81px]" />
      <div className="flex h-full shrink-0">
        {APP_ITEMS.map(([label, icon]) => (
          <button
            key={label}
            aria-label={label}
            className={`flex w-7 items-center justify-center ${label === 'SketchUp' ? 'bg-[#373737]' : ''} ${
              ['File Explorer', 'Winamp', 'Word'].includes(label) ? 'border-b border-[#1d3445]' : ''
            }`}
          >
            {icon}
          </button>
        ))}
      </div>
      <div className="ml-auto flex shrink-0 items-center pr-3">
        <button aria-label="People" className="mr-2">
          <svg viewBox="0 0 12 12" className="h-3 w-3" fill="none" stroke="#ddd" strokeWidth=".9"><circle cx="4" cy="6" r="1.800" /><path d="M1.500 11c0-4 5-4 5 0M7 6.500c2-2 4-1 4 1" /><circle cx="8.500" cy="3" r="1.800" /></svg>
        </button>
        <button aria-label="Show hidden icons" className="mr-1.5">
          <svg viewBox="0 0 8 8" className="h-2 w-2" fill="none" stroke="#eee"><path d="m1 6 3-3 3 3" /></svg>
        </button>
        <button aria-label="Volume" className="mr-1">
          <svg viewBox="0 0 12 12" className="h-2.5 w-2.5" fill="none" stroke="#ddd"><path d="M1 4.500h2l3-2.500v8L3 7.500H1zM7.500 4c1 1 1 3 0 4M9 2.500c2 2 2 5 0 7M10.500 1c2 3 2 7 0 10" /></svg>
        </button>
        <button aria-label="Battery" className="mr-1">
          <svg viewBox="0 0 12 12" className="h-2.5 w-2.5" fill="none" stroke="#ddd"><path d="M3 4h8v5H3zM1 2v3M3 2v3M.500 5h3L2 7" /></svg>
        </button>
        <button aria-label="Network" className="mr-1">
          <svg viewBox="0 0 12 12" className="h-2.5 w-2.5" fill="none" stroke="#777"><path d="M11 2c-4 0-8 4-8 9M11 5c-3 0-5 3-5 6M11 8c-1 0-2 1-2 3" /><circle cx="2" cy="2" r="1" fill="#fff" stroke="#fff" /></svg>
        </button>
        <div className="mr-2 w-8 text-center text-[7px] leading-[10px]">
          <div>1:21 PM</div>
          <div>6/10/2019</div>
        </div>
        <button aria-label="Notifications">
          <svg viewBox="0 0 12 12" className="h-3 w-3" fill="none" stroke="#eee"><path d="M1 2h10v7H8l-2 2-2-2H1z" /></svg>
        </button>
      </div>
    </div>
  );
}

const MENU = ['File', 'Edit', 'View', 'Camera', 'Draw', 'Tools', 'Window', 'Plugins', 'Help'];

function MenuLabel({ text }: { text: string }) {
  if (text === 'Draw') return <>D<u>r</u>aw</>;
  if (text === 'Plugins') return <>Plugins</>;
  return <><u>{text[0]}</u>{text.slice(1)}</>;
}

export default function App() {
  return (
    <div className="flex min-h-screen flex-col bg-white font-['Open_Sans','Noto_Sans',sans-serif] text-[7px] text-[#111]">
      <header className="relative flex h-[13px] items-center">
        <span className="mr-[3px] ml-px flex w-2"><svg viewBox="0 0 16 16" className="h-2 w-2"><path d="m1 3 8-2 6 2-1 9-6 3-5-2z" fill="#df242b" /><path d="m3 5 5-1 4 2-5 0 4 3-2 4" stroke="#fff" strokeWidth="1.500" fill="none" /></svg></span>
        <h1 className="font-['Lato','Open_Sans',sans-serif] whitespace-nowrap">Untitled.skp - SketchUp Pro</h1>
        {/* text cursor resting on the title */}
        <span className="absolute top-0 left-9 h-2 w-px bg-black" />
        <div className="ml-auto flex items-center gap-[18px] pr-[11px]">
          <button aria-label="Minimize"><svg viewBox="0 0 8 8" className="h-2 w-2" stroke="#222"><path d="M1 4.500h6" /></svg></button>
          <button aria-label="Restore"><svg viewBox="0 0 8 8" className="h-2 w-2" stroke="#222" strokeWidth=".8" fill="none"><path d="M1 2.500h5v5H1zM2.500 2.500V1h5v5H6" /></svg></button>
          <button aria-label="Close"><svg viewBox="0 0 8 8" className="h-2 w-2" stroke="#222" strokeWidth=".8"><path d="m1 1 6 6M7 1 1 7" /></svg></button>
        </div>
      </header>
      <nav className="flex h-3 items-center gap-[7px] pl-[3px]">
        {MENU.map((m) => <button key={m} className="leading-3"><MenuLabel text={m} /></button>)}
      </nav>
      <Toolbars />
      <main className="relative min-h-0 flex-1 basis-0 overflow-hidden bg-[#9abd92]">
        <div className="absolute inset-0"><Model /></div>
        <div className="absolute right-[35px] bottom-1 text-[#95b590]">
          <p className="text-[11px] leading-[14px]">Activate Windows</p>
          <p className="text-[8px] leading-[10px]">Go to Settings to activate Windows.</p>
        </div>
      </main>
      <StatusBar />
      <Taskbar />
    </div>
  );
}
